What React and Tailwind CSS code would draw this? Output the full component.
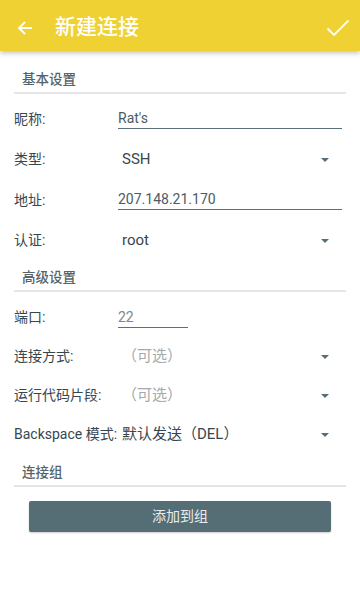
import React from "react";

const FONT = { fontFamily: "Roboto, 'Noto Sans CJK SC', sans-serif" };

function Arrow() {
  return (
    <svg width="10" height="6" viewBox="0 0 10 6" className="mr-[30px]">
      <path d="M1 1 L9 1 L5 5 Z" fill="#546e7a" />
    </svg>
  );
}

function SectionTitle({ children, pt }) {
  return (
    <div className={`mx-[14px] border-b-2 border-[#e3e5e6] pb-[5px] ${pt}`}>
      <div className="pl-2 text-[13.5px] leading-[16px] font-medium text-[#56646a]">{children}</div>
    </div>
  );
}

function TextRow({ label, value, width = "w-[224px]", h = "h-[40px]", color = "text-[#4b5b63]" }) {
  return (
    <div className={`flex ${h} items-center pl-[14px]`}>
      <div className="w-[104px] text-[14px] text-[#37474f]">{label}</div>
      <div className={`${width} h-[20px] border-b-[1.5px] border-[#5b707a] text-[14px] leading-[18px] ${color}`}>
        {value}
      </div>
    </div>
  );
}

function SelectRow({ label, value, muted, h = "h-[40px]" }) {
  return (
    <div className={`flex ${h} items-center pl-[14px]`}>
      <div className="w-[108px] shrink-0 whitespace-nowrap text-[14px] text-[#37474f]">{label}</div>
      <div className={`flex-1 text-[15px] ${muted ? "text-[#a3a9ac]" : "text-[#37474f]"}`}>{value}</div>
      <Arrow />
    </div>
  );
}

export default function App() {
  return (
    <div className="h-[600px] w-[360px] bg-white" style={FONT}>
      {/* toolbar */}
      <div className="relative z-10 flex h-[51px] items-center bg-[#f0d133] pt-[4px] shadow-[0_2px_5px_rgba(0,0,0,0.25)]">
        <svg width="16" height="16" viewBox="0 0 16 16" className="ml-[17px]">
          <path d="M15 8 H2 M8 2 L2 8 L8 14" stroke="white" strokeWidth="1.8" fill="none" />
        </svg>
        <div className="ml-[22px] flex-1 text-[21px] font-medium text-white">新建连接</div>
        <svg width="24" height="18" viewBox="0 0 24 18" className="mr-[10px]">
          <path d="M1.5 9.5 L8 16 L22.5 1.5" stroke="white" strokeWidth="1.8" fill="none" />
        </svg>
      </div>

      <SectionTitle pt="pt-[20px]">基本设置</SectionTitle>
      <div className="h-[5px]" />
      <TextRow label="昵称:" value="Rat's" />
      <SelectRow label="类型:" value="SSH" h="h-[41px]" />
      <TextRow label="地址:" value="207.148.21.170" />
      <SelectRow label="认证:" value="root" h="h-[41px]" />

      <SectionTitle pt="pt-[8px]">高级设置</SectionTitle>
      <div className="h-[6px]" />
      <TextRow label="端口:" value="22" width="w-[70px]" h="h-[39px]" color="text-[#7d878c]" />
      <SelectRow label="连接方式:" value="（可选）" muted h="h-[39px]" />
      <SelectRow label="运行代码片段:" value="（可选）" muted h="h-[39px]" />
      <SelectRow label="Backspace 模式:" value="默认发送（DEL）" h="h-[39px]" />

      <SectionTitle pt="pt-[10px]">连接组</SectionTitle>
      <div className="mx-[29px] mt-[14px] flex h-[31px] items-center justify-center rounded-[2px] bg-[#556d75] text-[14px] text-[#e8eced] shadow-[0_1px_2px_rgba(0,0,0,0.2)]">
        添加到组
      </div>
    </div>
  );
}
